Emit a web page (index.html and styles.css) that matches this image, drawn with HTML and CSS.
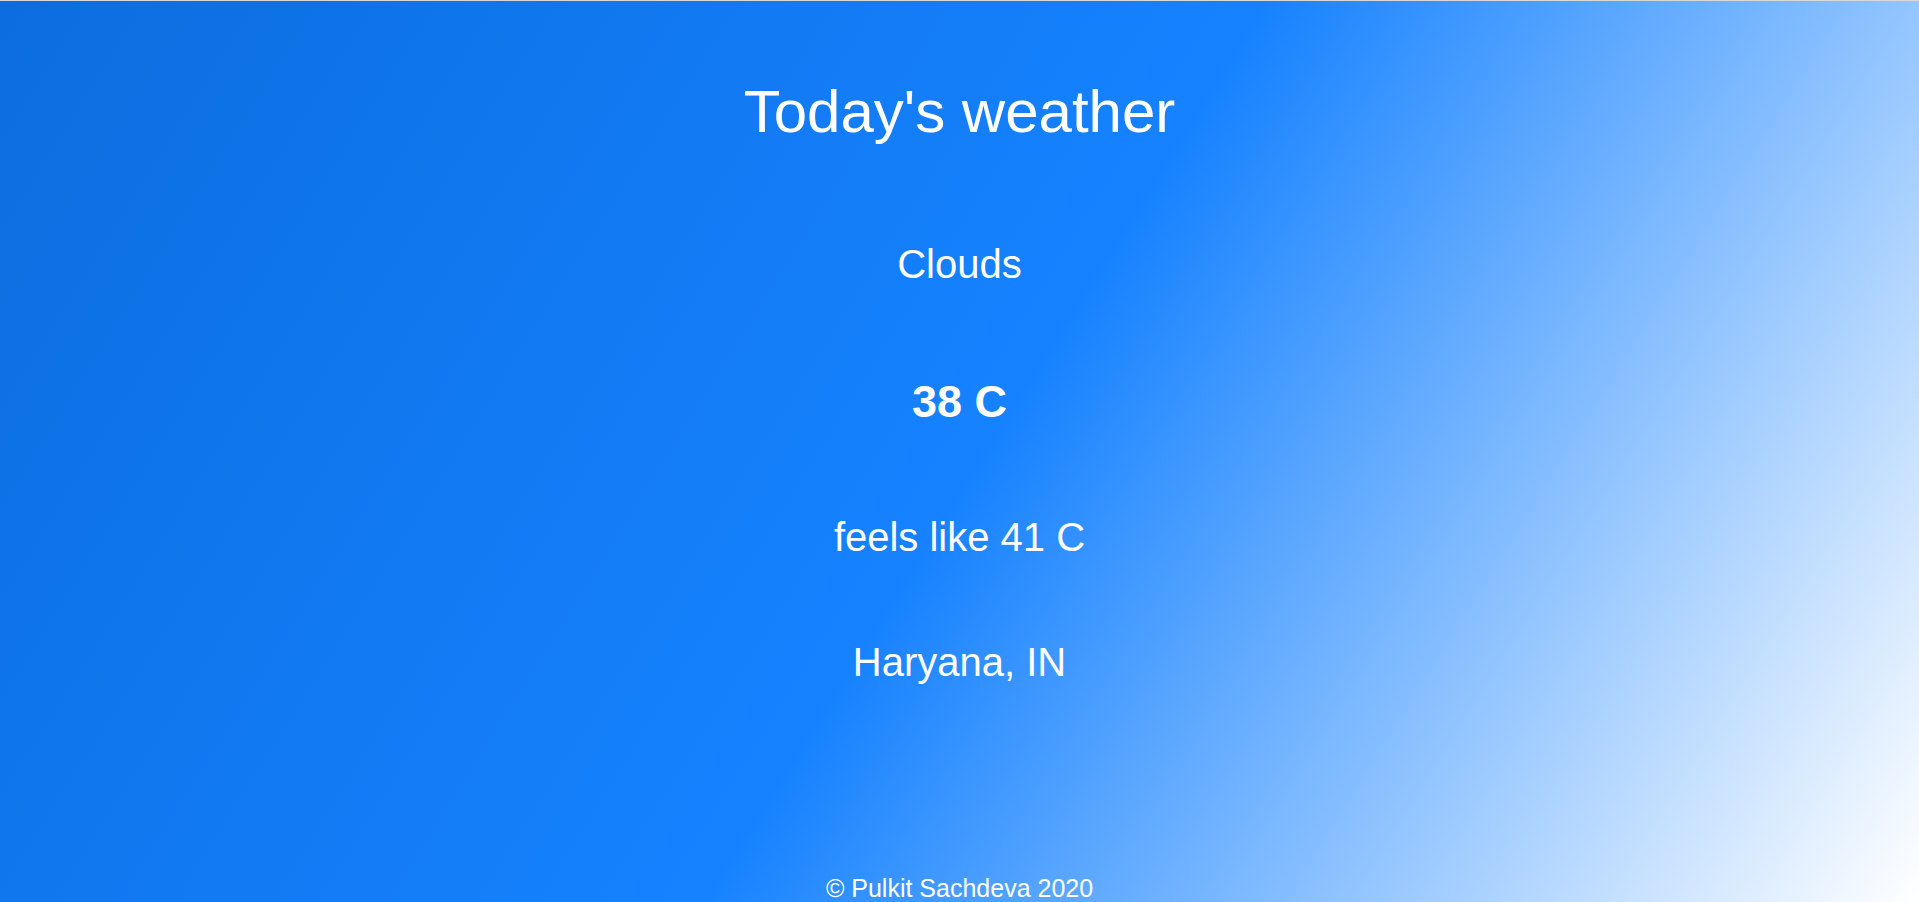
FILE: index.html
```html
<!DOCTYPE html>
<html lang="en">
<head>
<meta charset="utf-8">
<title>Today's weather</title>
<link rel="stylesheet" href="styles.css">
</head>
<body>
<main class="page">
  <h1 class="title">Today's weather</h1>
  <p class="line desc">Clouds</p>
  <p class="line temp">38 C</p>
  <p class="line feels">feels like 41 C</p>
  <p class="line place">Haryana, IN</p>
  <footer class="footer">© Pulkit Sachdeva 2020</footer>
</main>
</body>
</html>
```
FILE: styles.css
```css
html, body {
  margin: 0;
  padding: 0;
}
body {
  height: 902px;
  overflow: hidden;
  font-family: "Liberation Sans", Arial, sans-serif;
  color: #ffffff;
}
.page {
  box-sizing: border-box;
  height: 902px;
  border-top: 1px solid #d8d8d8;
  background: linear-gradient(122deg, #0b6ddf 0%, #1682ff 51%, #ffffff 100%);
  display: flex;
  flex-direction: column;
  align-items: center;
}
.title {
  font-size: 60px;
  font-weight: normal;
  line-height: 1;
  margin: 81px 0 0;
}
.line {
  font-size: 40px;
  line-height: 1;
  margin: 0;
}
.desc { margin-top: 102px; }
.temp { font-size: 45px; font-weight: bold; margin-top: 95px; }
.feels { margin-top: 93px; }
.place { margin-top: 85px; }
.footer {
  font-size: 25px;
  line-height: 1;
  margin-top: 194px;
}
```
